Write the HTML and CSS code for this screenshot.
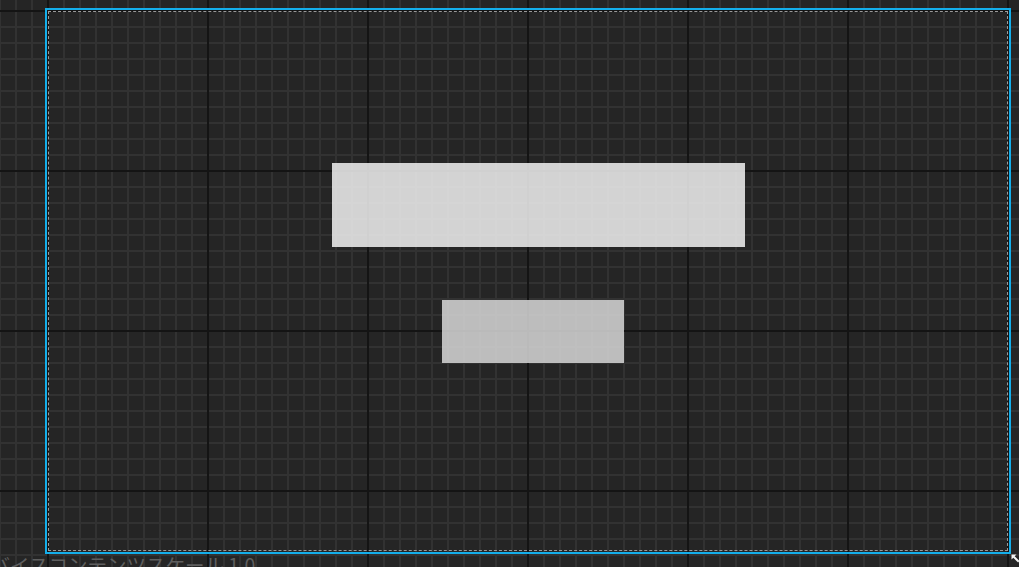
FILE: index.html
```html
<!DOCTYPE html>
<html lang="ja">
<head>
<meta charset="utf-8">
<title>UMG Designer</title>
<link rel="stylesheet" href="styles.css">
</head>
<body>
<div class="viewport">
  <div class="canvas">
    <div class="widget title-box"></div>
    <div class="widget button-box"></div>
    <svg class="resize" width="9" height="9" viewBox="0 0 9 9">
      <path d="M0.5 0.5 L5.5 0.5 L3.7 2.3 L8.5 7.1 L7.1 8.5 L2.3 3.7 L0.5 5.5 Z" fill="#f2f2f2"/>
    </svg>
  </div>
  <div class="scale-label">デバイスコンテンツスケール 1.0</div>
</div>
</body>
</html>
```

FILE: styles.css
```css
html, body {
  margin: 0;
  padding: 0;
  width: 1019px;
  height: 567px;
  overflow: hidden;
}

.viewport {
  width: 1019px;
  height: 567px;
  overflow: hidden;
  background-color: #252525;
  background-image:
    linear-gradient(to right, #141414 0, #141414 2px, transparent 2px),
    linear-gradient(to bottom, #141414 0, #141414 2px, transparent 2px),
    linear-gradient(to right, #323232 0, #323232 2px, transparent 2px),
    linear-gradient(to bottom, #323232 0, #323232 2px, transparent 2px);
  background-size: 160px 160px, 160px 160px, 16px 16px, 16px 16px;
  background-position: 47px 0, 0 10px, 15px 0, 0 10px;
  display: flex;
  flex-direction: column;
  align-items: flex-start;
  font-family: "Noto Sans CJK JP", "Noto Sans", sans-serif;
}

.canvas {
  position: relative;
  box-sizing: border-box;
  width: 960px;
  height: 540px;
  margin: 11px 0 0 48px;
  border: 1px dashed #9a9a9a;
  outline: 2px solid #14aeea;
  outline-offset: 1px;
  flex: none;
}

.widget {
  position: absolute;
}

.title-box {
  left: 283px;
  top: 151px;
  width: 413px;
  height: 84px;
  background: rgba(240, 240, 240, 0.86);
}

.button-box {
  left: 393px;
  top: 288px;
  width: 182px;
  height: 63px;
  background: rgba(214, 214, 214, 0.86);
}

.resize {
  position: absolute;
  right: -13px;
  bottom: -13px;
  display: block;
}

.scale-label {
  margin: 4px 0 0 -29px;
  font-size: 19.5px;
  line-height: 20px;
  color: #5e5e5e;
  white-space: nowrap;
}
```
